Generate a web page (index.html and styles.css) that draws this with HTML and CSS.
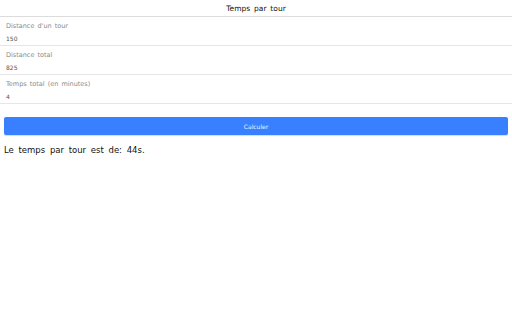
FILE: index.html
```html
<!DOCTYPE html>
<html lang="fr">
<head>
<meta charset="utf-8">
<title>Temps par tour</title>
<link rel="stylesheet" href="styles.css">
</head>
<body>
<header class="toolbar"><span class="title">Temps par tour</span></header>
<main class="content">
  <div class="list">
    <div class="item">
      <label class="label">Distance d'un tour</label>
      <div class="value">150</div>
    </div>
    <div class="item">
      <label class="label">Distance total</label>
      <div class="value">825</div>
    </div>
    <div class="item">
      <label class="label">Temps total (en minutes)</label>
      <div class="value">4</div>
    </div>
  </div>
  <div class="actions">
    <button class="btn">Calculer</button>
  </div>
  <p class="result">Le temps par tour est de: 44s.</p>
</main>
</body>
</html>
```

FILE: styles.css
```css
* {
  box-sizing: border-box;
}
html, body {
  margin: 0;
  padding: 0;
  background: #fff;
  font-family: "DejaVu Sans", sans-serif;
  color: #000;
}
.toolbar {
  height: 17px;
  display: flex;
  align-items: center;
  justify-content: center;
  border-bottom: 1px solid #dcdcdc;
}
.title {
  font-size: 7.5px;
  word-spacing: 1.5px;
  color: #111;
}
.list {
  display: flex;
  flex-direction: column;
}
.item {
  height: 29px;
  border-bottom: 1px solid #e6e6e6;
  padding: 1px 6px 0;
  display: flex;
  flex-direction: column;
  justify-content: center;
  gap: 5px;
}
.label {
  font-size: 6.5px;
  color: #8a8a8a;
  word-spacing: 1px;
}
.value {
  font-size: 6px;
  color: #555;
}
.actions {
  padding: 13px 4px 0;
}
.btn {
  display: block;
  width: 100%;
  height: 18px;
  border: none;
  border-radius: 2px;
  background: #3880ff;
  color: #e8f0ff;
  font-family: "DejaVu Sans", sans-serif;
  font-size: 6px;
  box-shadow: 0 1px 1px rgba(0,0,0,0.15);
}
.result {
  margin: 10px 4px 0;
  font-size: 8.5px;
  word-spacing: 2px;
  color: #111;
}
```
